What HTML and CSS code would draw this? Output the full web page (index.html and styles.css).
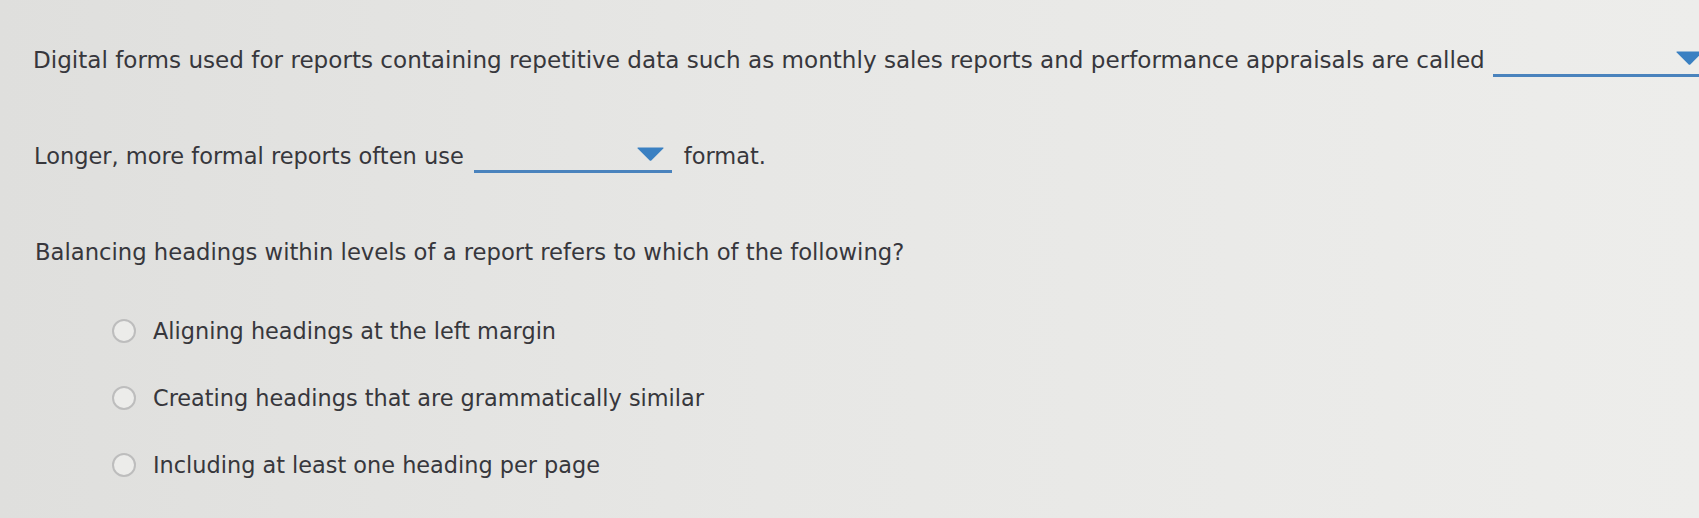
FILE: index.html
```html
<!DOCTYPE html>
<html>
<head>
<meta charset="utf-8">
<link rel="stylesheet" href="styles.css">
</head>
<body>
<div class="page">
  <div class="row row1"><span class="t">Digital forms used for reports containing repetitive data such as monthly sales reports and performance appraisals are called</span><span class="dd dd1"><svg class="tri" viewBox="0 0 27 14" width="27" height="14"><path d="M1 0.5 H26 Q27 0.5 26.3 1.4 L14.3 13.4 Q13.5 14.2 12.7 13.4 L0.7 1.4 Q0 0.5 1 0.5 Z"/></svg></span></div>
  <div class="row row2"><span class="t">Longer, more formal reports often use</span><span class="dd dd2"><svg class="tri" viewBox="0 0 27 14" width="27" height="14"><path d="M1 0.5 H26 Q27 0.5 26.3 1.4 L14.3 13.4 Q13.5 14.2 12.7 13.4 L0.7 1.4 Q0 0.5 1 0.5 Z"/></svg></span><span class="t after">format.</span></div>
  <div class="row row3"><span class="t">Balancing headings within levels of a report refers to which of the following?</span></div>
  <div class="opts">
    <label class="opt"><span class="radio"></span><span class="t">Aligning headings at the left margin</span></label>
    <label class="opt"><span class="radio"></span><span class="t">Creating headings that are grammatically similar</span></label>
    <label class="opt"><span class="radio"></span><span class="t">Including at least one heading per page</span></label>
  </div>
</div>
</body>
</html>
```

FILE: styles.css
```css
html, body {
  margin: 0;
  padding: 0;
  height: 100%;
  overflow: hidden;
}
body {
  background: linear-gradient(to right, #dfdfdd 0%, #e7e7e5 45%, #ededeb 100%);
  font-family: "DejaVu Sans", Verdana, sans-serif;
  font-size: 22px;
  color: #37373c;
}
.page {
  padding-left: 33px;
  padding-top: 45px;
}
.row {
  display: flex;
  align-items: flex-start;
  height: 30px;
  line-height: 30px;
  white-space: nowrap;
}
.row > * { flex: none; }
.row1 { font-size: 23.1px; }
.row2 { margin-top: 66px; font-size: 22.5px; padding-left: 1px; }
.row3 { margin-top: 66px; font-size: 22.7px; padding-left: 2px; }
.dd {
  display: flex;
  justify-content: flex-end;
  box-sizing: border-box;
  height: 32px;
  border-bottom: 3px solid #4a83bd;
  padding-right: 8px;
  padding-top: 6px;
}
.dd1 { width: 218px; margin-left: 8px; }
.dd2 { width: 198px; margin-left: 10px; }
.tri { fill: #3a80c2; display: block; }
.after { margin-left: 12px; }
.opts {
  display: flex;
  flex-direction: column;
  gap: 37px;
  margin-top: 49px;
  padding-left: 79px;
  font-size: 22.4px;
}
.opt {
  display: flex;
  align-items: center;
  height: 30px;
  line-height: 30px;
  white-space: nowrap;
}
.radio {
  width: 24px;
  height: 24px;
  box-sizing: border-box;
  border: 2px solid #bdbdbd;
  border-radius: 50%;
  background: #ececea;
  margin-right: 17px;
  flex: none;
}
```
